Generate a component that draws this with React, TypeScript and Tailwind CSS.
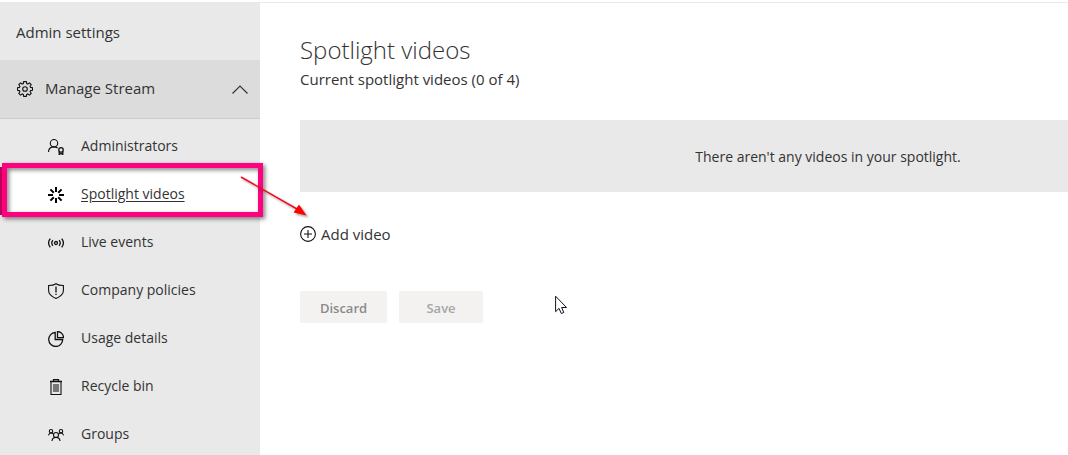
import React from "react";

type IconProps = { children: React.ReactNode };

function Icon({ children }: IconProps) {
  return (
    <svg
      className="h-4 w-4 shrink-0"
      viewBox="0 0 16 16"
      fill="none"
      stroke="#111111"
      strokeWidth="1.1"
      aria-hidden="true"
    >
      {children}
    </svg>
  );
}

const administratorIcon = (
  <Icon>
    <circle cx="6" cy="4.2" r="3.7" />
    <path d="M.5 13C.6 10 2.600 7.900 6 7.900c1.500 0 2.700.4 3.600 1.100" />
    <circle cx="13" cy="10.900" r="2.200" strokeWidth="1.300" />
    <path d="M11.200 12.500v3l1.800-1 1.800 1v-3" strokeWidth="1.300" />
  </Icon>
);

const spotlightIcon = (
  <Icon>
    <path
      strokeWidth="2"
      stroke="#000000"
      d="M8 0v5M8 11v5M0 8h5M11 8h5M2.400 2.400l3.400 3.400M10.200 10.200l3.400 3.400M13.600 2.400l-3.400 3.400M5.800 10.200l-3.400 3.400"
    />
  </Icon>
);

const liveIcon = (
  <Icon>
    <circle cx="8" cy="8" r="1.500" strokeWidth="1.300" />
    <path
      strokeWidth="1.300"
      d="M4.900 5.200C3.600 6.800 3.600 9.200 4.900 10.800M11.100 5.200c1.300 1.600 1.300 4 0 5.600M2.300 3.700C.2 6.300.2 9.700 2.300 12.300M13.700 3.700c2.100 2.600 2.100 6 0 8.600"
    />
  </Icon>
);

const shieldIcon = (
  <Icon>
    <path d="M8 .7C6.300 2 3.500 2.500.6 2.500v5c0 3.800 3.400 6.300 7.400 8 4-1.700 7.400-4.200 7.400-8v-5C12.500 2.500 9.700 2 8 .7Z" />
    <path strokeWidth="1.300" d="M8 3.500v6M8 10.700v1.300" />
  </Icon>
);

const usageIcon = (
  <Icon>
    <path strokeWidth="1.300" d="M7.200 1.500A7 7 0 1 0 14.700 8.500H7.200Z" />
    <path strokeWidth="1.300" d="M9.500.6a6 6 0 0 1 6 6h-6Z" />
  </Icon>
);

const binIcon = (
  <Icon>
    <path d="M2 2.500h12M5.500 2.500v-2h5v2" strokeWidth="1.300" />
    <path d="M3 2.500v13h10v-13" />
    <path d="M5.500 5.500h5v7h-5z" fill="#777777" stroke="#777777" />
  </Icon>
);

const groupsIcon = (
  <Icon>
    <circle cx="8" cy="8" r="2.500" />
    <circle cx="3" cy="4.200" r="1.700" />
    <circle cx="13" cy="4.200" r="1.700" />
    <path d="M4 14c.2-2.300 1.600-3.600 4-3.600s3.800 1.300 4 3.600M.5 8.300C.8 6.700 1.600 6 3 6c1.200 0 2 .4 2.500 1.200M15.500 8.300C15.200 6.700 14.400 6 13 6c-1.200 0-2 .4-2.500 1.200" />
  </Icon>
);

const gearIcon = (
  <Icon>
    <path d="M6.700.6h2.600l.4 1.900 1.100.5 1.700-1.100 1.700 1.700-1.100 1.700.5 1.100 1.900.4v2.400l-1.900.4-.5 1.100 1.100 1.700-1.700 1.700-1.700-1.100-1.100.5-.4 1.900H6.700l-.4-1.900-1.100-.5-1.700 1.100-1.700-1.700 1.100-1.700-.5-1.100-1.900-.4V6.800l1.900-.4.5-1.100-1.100-1.700 1.700-1.700 1.700 1.100 1.100-.5Z" />
    <circle cx="8" cy="8" r="2.300" />
  </Icon>
);

const items = [
  { label: "Administrators", icon: administratorIcon },
  { label: "Spotlight videos", icon: spotlightIcon, active: true },
  { label: "Live events", icon: liveIcon },
  { label: "Company policies", icon: shieldIcon },
  { label: "Usage details", icon: usageIcon },
  { label: "Recycle bin", icon: binIcon },
  { label: "Groups", icon: groupsIcon },
];

function Sidebar() {
  return (
    <aside className="w-[260px] shrink-0 bg-[#e9e9e9]">
      <h2 className="flex h-[58px] items-center px-4 pt-1 text-[15px]">Admin settings</h2>
      <button
        type="button"
        aria-expanded="true"
        className="flex h-[59px] w-full items-center gap-3 border-b border-[#cdcdcd] bg-[#dcdcdc] pr-3 pl-[17px] text-[15px]"
      >
        {gearIcon}
        <span className="grow text-left">Manage Stream</span>
        <svg className="h-4 w-4" viewBox="0 0 16 16" fill="none" stroke="#333333" strokeWidth="1.2" aria-hidden="true">
          <path d="M.5 12.500 8 5l7.500 7.500" />
        </svg>
      </button>
      <nav aria-label="Manage Stream">
        <ul>
          {items.map((item) => (
            <li key={item.label} className="relative">
              <a
                href="#"
                aria-current={item.active ? "page" : undefined}
                className={
                  item.active
                    ? "flex h-12 items-center gap-[17px] border-l-4 border-[#c4005c] bg-white pt-2 pl-11 underline underline-offset-2"
                    : "flex h-12 items-center gap-[17px] pt-2 pl-12"
                }
              >
                {item.icon}
                <span className="pb-0.5">{item.label}</span>
              </a>
              {item.active && <Callout />}
            </li>
          ))}
        </ul>
      </nav>
    </aside>
  );
}

function Callout() {
  return (
    <div className="pointer-events-none absolute -top-1 left-0.5 z-10 h-[54px] w-[261px]">
      <div className="h-full border-5 border-[#ff007f] drop-shadow-[2px_2px_2px_rgba(0,0,0,0.5)]" />
      <svg
        className="absolute top-2 left-[234px] h-12 w-[76px] drop-shadow-[2px_2px_1px_rgba(0,0,0,0.35)]"
        viewBox="0 0 76 48"
        aria-hidden="true"
      >
        <path d="M5 6 61 38" stroke="#f5091c" strokeWidth="1.5" />
        <path d="M70.500 44.500 57.500 41.500 63 33.500Z" fill="#ff0000" />
      </svg>
    </div>
  );
}

function Cursor() {
  return (
    <svg className="absolute top-[295px] left-[555px] h-5 w-3" viewBox="0 0 12 20" aria-hidden="true">
      <path
        d="M.6 1.200v15.500l3.400-3.300 2.300 5.100 2.500-1-2.200-5h4.900Z"
        fill="#ffffff"
        stroke="#111122"
      />
    </svg>
  );
}

export default function App() {
  return (
    <div className="relative h-screen overflow-hidden bg-white pt-0.5 font-['Open_Sans','Noto_Sans',sans-serif] text-sm text-[#333333]">
      <div className="flex min-h-full">
        <Sidebar />
        <main className="min-w-0 grow overflow-hidden border-t border-[#ebebeb] pt-8 pl-10">
          <h1 className="text-2xl leading-[30px] font-light">Spotlight videos</h1>
          <p className="mt-1 text-[15px] leading-5">Current spotlight videos (0 of 4)</p>
          <div className="mt-[31px] flex h-18 min-w-[1056px] items-center justify-center bg-[#e9e9e9] pt-0.5">
            There aren't any videos in your spotlight.
          </div>
          <button type="button" className="mt-8 flex h-5 items-center gap-[5px] text-[15px]">
            <Icon>
              <circle cx="8" cy="8" r="7.400" />
              <path d="M8 4v8M4 8h8" />
            </Icon>
            <span className="pt-0.5">Add video</span>
          </button>
          <div className="mt-[47px] flex gap-3">
            <button
              type="button"
              disabled
              className="h-8 w-[87px] rounded-xs bg-[#f3f2f1] pt-0.5 text-[13px] font-semibold text-[#8a8a8a]"
            >
              Discard
            </button>
            <button
              type="button"
              disabled
              className="h-8 w-[84px] rounded-xs bg-[#f3f2f1] pt-0.5 text-[13px] font-semibold text-[#a6a6a6]"
            >
              Save
            </button>
          </div>
        </main>
      </div>
      <Cursor />
    </div>
  );
}
